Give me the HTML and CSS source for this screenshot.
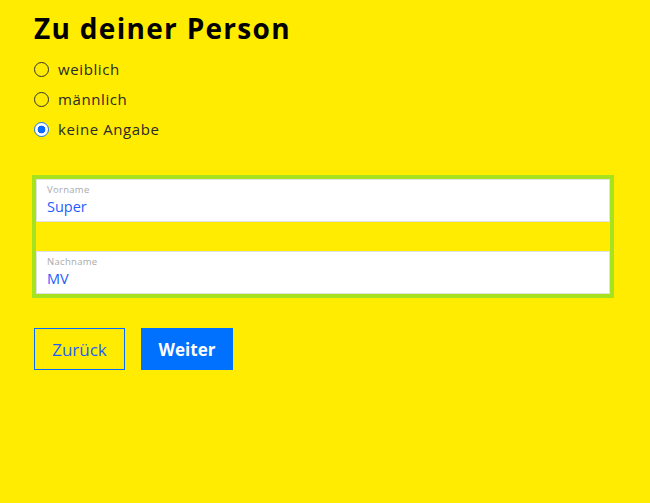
FILE: index.html
```html
<!DOCTYPE html>
<html lang="de">
<head>
<meta charset="utf-8">
<link rel="stylesheet" href="styles.css">
</head>
<body>
<main class="page">
  <h1 class="title">Zu deiner Person</h1>
  <div class="radios">
    <label class="radio"><span class="dot"></span><span class="radio-text">weiblich</span></label>
    <label class="radio"><span class="dot"></span><span class="radio-text">männlich</span></label>
    <label class="radio"><span class="dot checked"></span><span class="radio-text">keine Angabe</span></label>
  </div>
  <div class="fields">
    <div class="field">
      <span class="field-label">Vorname</span>
      <span class="field-value">Super</span>
    </div>
    <div class="field-gap"></div>
    <div class="field">
      <span class="field-label">Nachname</span>
      <span class="field-value">MV</span>
    </div>
  </div>
  <div class="actions">
    <button class="btn btn-outline">Zurück</button>
    <button class="btn btn-primary">Weiter</button>
  </div>
</main>
</body>
</html>
```
FILE: styles.css
```css
html, body {
  margin: 0;
  padding: 0;
  background: #ffec00;
}
body {
  font-family: "Open Sans", Lato, sans-serif;
  color: #222;
}
.page {
  padding: 10px 0 0 34px;
}
.title {
  margin: 0;
  font-size: 28px;
  font-weight: 700;
  line-height: 36px;
  letter-spacing: 1.3px;
  color: #000;
}
.radios {
  margin-top: 8px;
  display: flex;
  flex-direction: column;
}
.radio {
  display: flex;
  align-items: center;
  height: 30px;
  gap: 9px;
}
.dot {
  box-sizing: border-box;
  width: 15px;
  height: 15px;
  border: 1.5px solid #333;
  border-radius: 50%;
}
.dot.checked {
  border-color: #1a73f0;
  background: radial-gradient(circle, #0a6cff 0 3.6px, #fff 4.2px);
}
.radio-text {
  font-size: 15px;
  letter-spacing: 0.6px;
  color: #2a2a2a;
}
.fields {
  margin: 31px 0 0 -2px;
  width: 574px;
  border: 4px solid #a6e31f;
  display: flex;
  flex-direction: column;
}
.field {
  box-sizing: border-box;
  height: 43px;
  background: #fff;
  border: 1px solid #e2e2e2;
  padding: 4px 0 0 10px;
  display: flex;
  flex-direction: column;
}
.field-gap {
  height: 29px;
}
.field-label {
  font-size: 9.5px;
  letter-spacing: 0.3px;
  color: #aaa;
  line-height: 12px;
}
.field-value {
  font-size: 14.5px;
  color: #1f5cff;
  line-height: 20px;
  margin-top: 1px;
}
.actions {
  margin-top: 30px;
  display: flex;
  gap: 16px;
}
.btn {
  font-family: "Open Sans", sans-serif;
  font-size: 17px;
  height: 42px;
  box-sizing: border-box;
  cursor: pointer;
  border-radius: 0;
  padding: 0;
}
.btn-outline {
  width: 91px;
  background: transparent;
  border: 1px solid #0a6cff;
  color: #1f5cff;
}
.btn-primary {
  width: 92px;
  background: #0070ff;
  border: none;
  color: #fff;
  font-weight: 700;
}
```
